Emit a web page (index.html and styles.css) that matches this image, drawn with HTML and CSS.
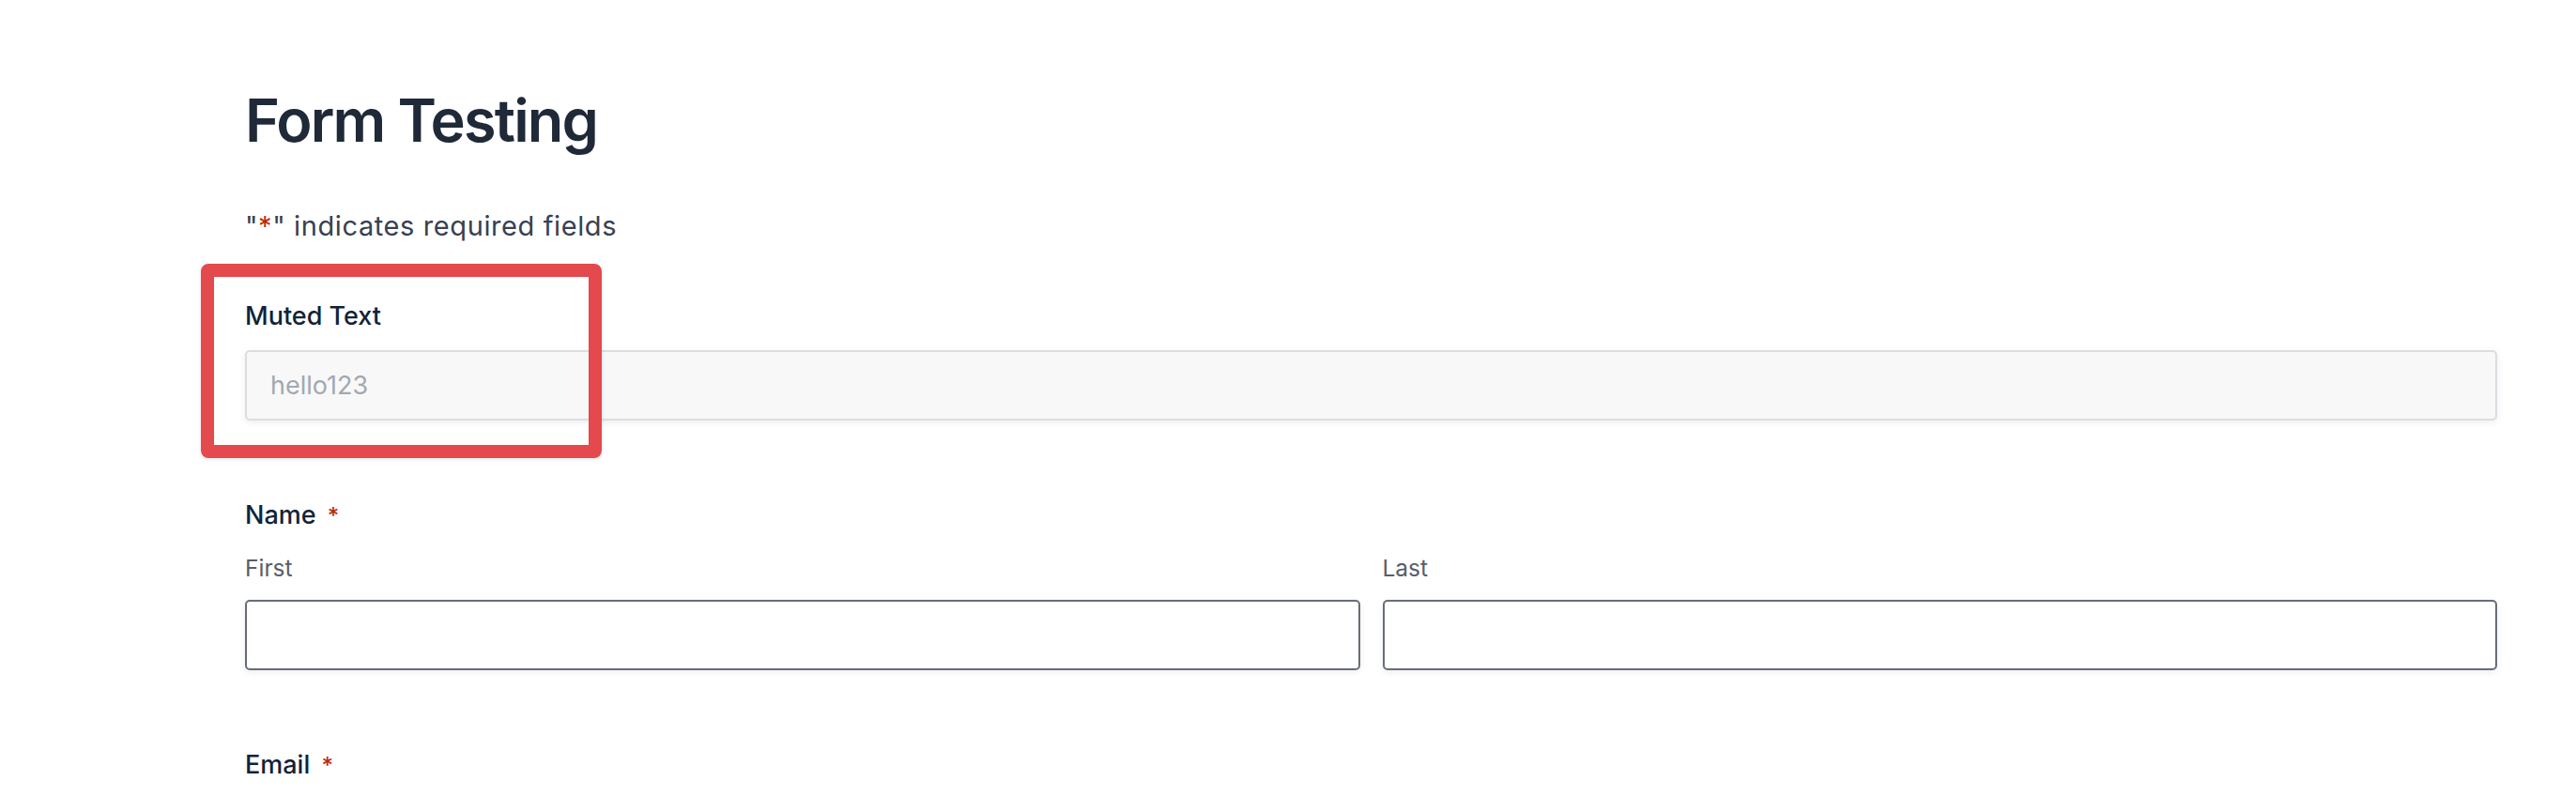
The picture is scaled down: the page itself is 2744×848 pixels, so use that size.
FILE: index.html
```html
<!DOCTYPE html>
<html lang="en">
<head>
<meta charset="utf-8">
<title>Form Testing</title>
<link rel="stylesheet" href="styles.css">
</head>
<body>
<main class="page">
  <h1 class="title">Form Testing</h1>
  <p class="legend">"<span class="req">*</span>" indicates required fields</p>
  <form class="form">
    <div class="field">
      <label class="label" for="muted">Muted Text</label>
      <input class="input input-muted" id="muted" type="text" value="hello123" readonly>
    </div>
    <div class="field field-name">
      <div class="label">Name <span class="req req-label">*</span></div>
      <div class="name-grid">
        <div class="sub">
          <label class="sublabel" for="first">First</label>
          <input class="input" id="first" type="text">
        </div>
        <div class="sub">
          <label class="sublabel" for="last">Last</label>
          <input class="input" id="last" type="text">
        </div>
      </div>
    </div>
    <div class="field field-email">
      <label class="label" for="email">Email <span class="req req-label">*</span></label>
      <input class="input" id="email" type="email">
    </div>
  </form>
  <div class="highlight"></div>
</main>
</body>
</html>
```
FILE: styles.css
```css
html, body {
  margin: 0;
  padding: 0;
  background: #ffffff;
  overflow: hidden;
}
body {
  font-family: Inter, "Noto Sans", "Liberation Sans", sans-serif;
  width: 2744px;
  height: 848px;
}
.page {
  position: relative;
  padding: 90px 84px 0 261px;
  box-sizing: border-box;
  width: 2744px;
  height: 848px;
  overflow: hidden;
}
.title {
  margin: 0;
  font-size: 63px;
  line-height: 76px;
  font-weight: 600;
  color: #1f2937;
  letter-spacing: -1.8px;
}
.legend {
  margin: 55px 0 0;
  font-size: 29px;
  line-height: 40px;
  color: #374151;
  letter-spacing: 0.6px;
}
.req {
  color: #c02b0a;
}
.form {
  display: flex;
  flex-direction: column;
  margin-top: 57px;
}
.field {
  display: flex;
  flex-direction: column;
  gap: 17px;
}
.field-name {
  margin-top: 82px;
  gap: 18px;
}
.field-email {
  margin-top: 82px;
}
.label {
  font-size: 27px;
  line-height: 38px;
  font-weight: 500;
  color: #112337;
}
.req-label {
  font-size: 24px;
  margin-left: 5px;
  font-weight: 500;
}
.name-grid {
  display: grid;
  grid-template-columns: 1fr 1fr;
  gap: 24px;
}
.sub {
  display: flex;
  flex-direction: column;
  gap: 16px;
}
.sublabel {
  font-size: 24.5px;
  line-height: 36px;
  color: #585e6a;
}
.input {
  box-sizing: border-box;
  width: 100%;
  height: 75px;
  margin: 0;
  padding: 0 25px;
  border: 2px solid #686e77;
  border-radius: 5px;
  background: #ffffff;
  box-shadow: 0 2px 7px rgba(18, 25, 97, 0.08);
  font-family: Inter, "Noto Sans", "Liberation Sans", sans-serif;
  font-size: 27px;
  color: #112337;
  outline: none;
}
.input-muted {
  background: #f8f8f8;
  border-color: #dcdde0;
  color: #a3a8b0;
}
.highlight {
  position: absolute;
  left: 214px;
  top: 281px;
  width: 427px;
  height: 207px;
  box-sizing: border-box;
  border: 14px solid #e4494e;
  border-radius: 8px;
  box-shadow: 0 1px 4px rgba(0, 0, 0, 0.12);
  pointer-events: none;
}
```
